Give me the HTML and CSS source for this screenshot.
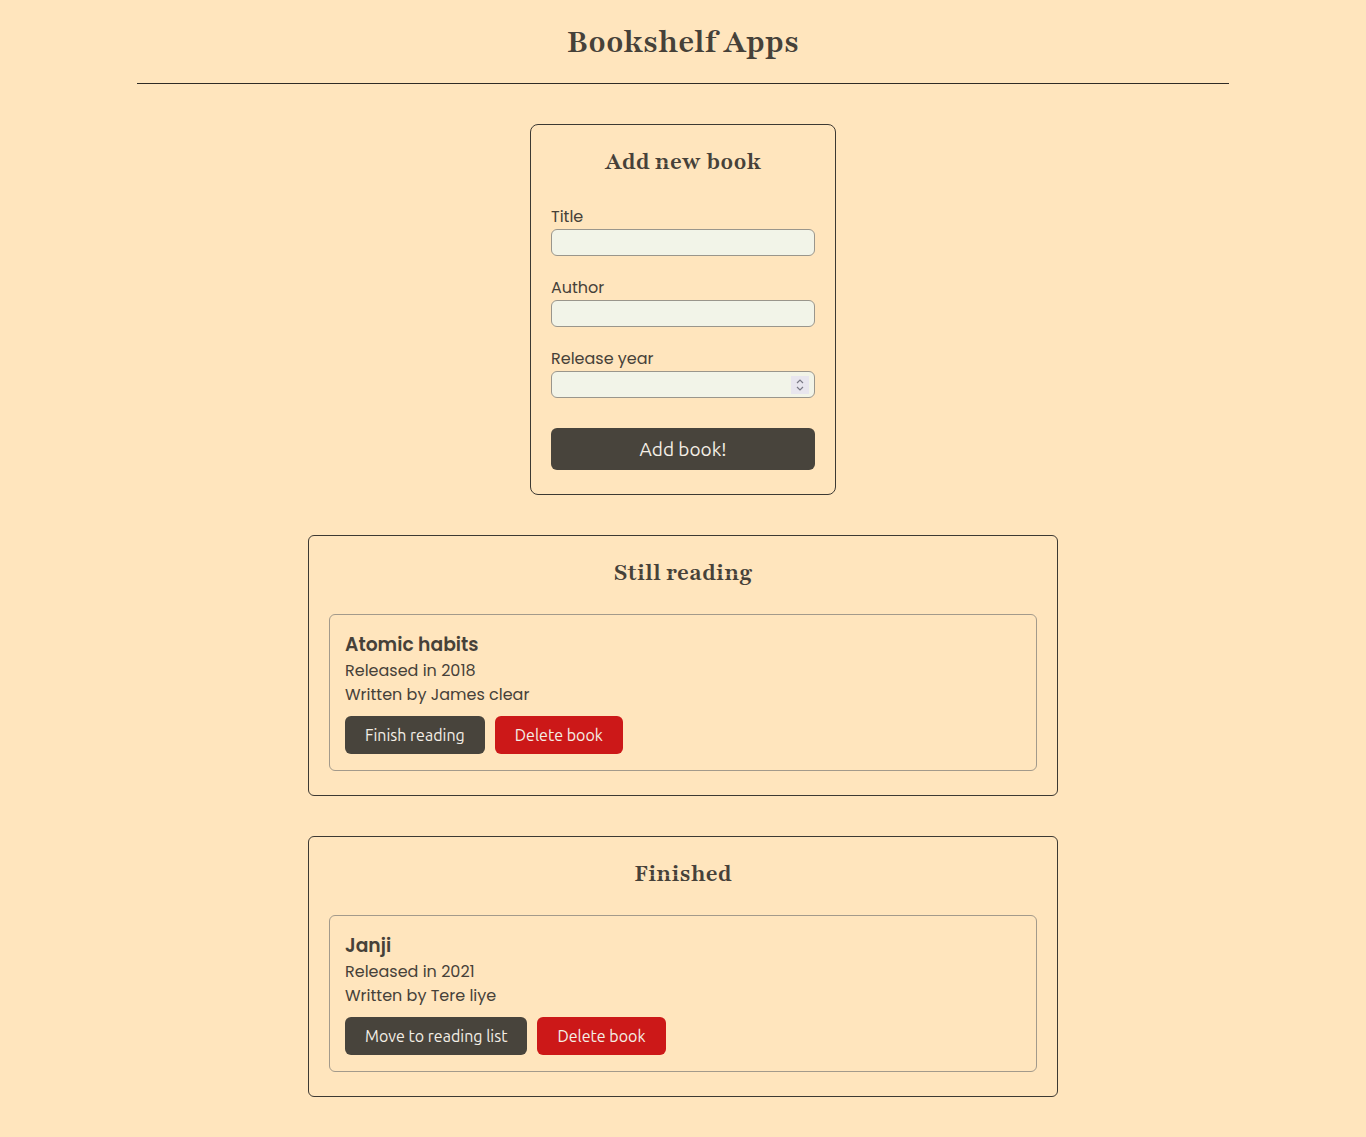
FILE: index.html
```html
<!DOCTYPE html>
<html lang="en">
<head>
<meta charset="utf-8">
<title>Bookshelf Apps</title>
<link rel="stylesheet" href="styles.css">
</head>
<body>
<header class="header">
  <h1 class="app-title">Bookshelf Apps</h1>
</header>
<main class="main">
  <section class="form-box">
    <h2 class="box-title">Add new book</h2>
    <form class="book-form">
      <div class="field">
        <label class="field-label" for="title">Title</label>
        <input class="field-input" id="title" type="text">
      </div>
      <div class="field">
        <label class="field-label" for="author">Author</label>
        <input class="field-input" id="author" type="text">
      </div>
      <div class="field">
        <label class="field-label" for="year">Release year</label>
        <div class="field-input number-input" id="year">
          <span class="spinner">
            <svg width="10" height="14" viewBox="0 0 10 14"><path d="M2 5 L5 2 L8 5 M2 9 L5 12 L8 9" fill="none" stroke="#7a7a86" stroke-width="1.2"/></svg>
          </span>
        </div>
      </div>
      <button type="button" class="btn btn-submit">Add book!</button>
    </form>
  </section>

  <section class="shelf">
    <h2 class="box-title">Still reading</h2>
    <article class="book">
      <h3 class="book-title">Atomic habits</h3>
      <p class="book-meta">Released in 2018</p>
      <p class="book-meta">Written by James clear</p>
      <div class="actions">
        <button type="button" class="btn btn-dark">Finish reading</button>
        <button type="button" class="btn btn-red">Delete book</button>
      </div>
    </article>
  </section>

  <section class="shelf">
    <h2 class="box-title">Finished</h2>
    <article class="book">
      <h3 class="book-title">Janji</h3>
      <p class="book-meta">Released in 2021</p>
      <p class="book-meta">Written by Tere liye</p>
      <div class="actions">
        <button type="button" class="btn btn-dark">Move to reading list</button>
        <button type="button" class="btn btn-red">Delete book</button>
      </div>
    </article>
  </section>
</main>
</body>
</html>
```

FILE: styles.css
```css
* { box-sizing: border-box; }
html, body { margin: 0; padding: 0; }
body {
  background: #ffe5bd;
  color: #464139;
  font-family: "Poppins", "Open Sans", "Noto Sans", sans-serif;
  min-height: 1137px;
}
.header {
  width: 80%;
  margin: 0 auto;
  border-bottom: 1px solid #2f2b25;
  padding: 18px 0 17px;
  text-align: center;
}
.app-title {
  margin: 0;
  font-family: "Playfair", "Playfair Display", serif;
  font-size: 35px;
  font-weight: 700;
  line-height: 48px;
  color: #464139;
}
.main {
  display: flex;
  flex-direction: column;
  align-items: center;
  gap: 40px;
  padding-top: 40px;
  padding-bottom: 40px;
}
.form-box {
  width: 306px;
  border: 1px solid #3d3933;
  border-radius: 8px;
  padding: 20px 20px 24px;
}
.box-title {
  margin: 0;
  text-align: center;
  font-family: "Playfair", "Playfair Display", serif;
  font-weight: 700;
  font-size: 26px;
  line-height: 34px;
  color: #464139;
}
.book-form {
  display: flex;
  flex-direction: column;
  margin-top: 26px;
}
.field {
  display: flex;
  flex-direction: column;
  margin-bottom: 20px;
}
.field-label {
  font-size: 16px;
  line-height: 24px;
  color: #464139;
}
.field-input {
  height: 27px;
  background: #f2f4e8;
  border: 1px solid #9a968c;
  border-radius: 6px;
  font: inherit;
}
.number-input {
  display: flex;
  justify-content: flex-end;
  align-items: center;
  padding-right: 5px;
}
.spinner {
  display: flex;
  align-items: center;
  justify-content: center;
  width: 18px;
  height: 18px;
  background: #e8e6ee;
}
.btn {
  border: none;
  border-radius: 6px;
  color: #f4efe6;
  font-family: "Ubuntu", "Open Sans", "Noto Sans", sans-serif;
  cursor: pointer;
}
.btn-submit {
  margin-top: 10px;
  height: 42px;
  background: #48443c;
  font-size: 19px;
}
.shelf {
  width: 750px;
  border: 1px solid #3d3933;
  border-radius: 6px;
  padding: 20px 20px 24px;
}
.book {
  margin-top: 24px;
  border: 1px solid #a39a8b;
  border-radius: 6px;
  padding: 15px 15px 16px;
}
.book-title {
  margin: 0;
  font-size: 18.72px;
  font-weight: 600;
  line-height: 29px;
}
.book-meta {
  margin: 0;
  font-size: 16px;
  line-height: 24px;
}
.actions {
  display: flex;
  gap: 10px;
  margin-top: 9px;
}
.btn-dark, .btn-red {
  height: 38px;
  padding: 0 20px;
  font-size: 16px;
}
.btn-dark { background: #48443c; }
.btn-red { background: #cc1818; }
```
